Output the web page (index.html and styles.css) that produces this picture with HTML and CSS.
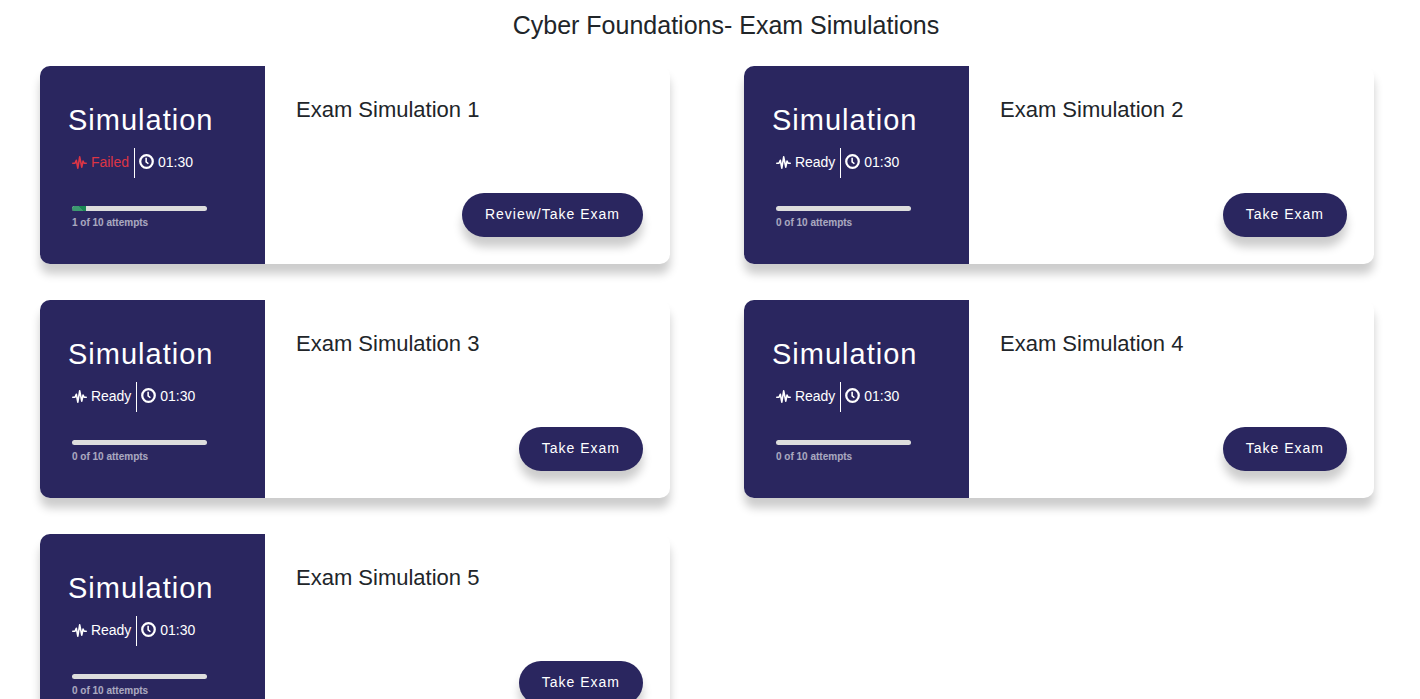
FILE: index.html
```html
<!DOCTYPE html>
<html lang="en">
<head>
  <meta charset="UTF-8" />
  <title>Cyber Foundations- Exam Simulations</title>
  <meta name="viewport" content="width=device-width, initial-scale=1.0" />
  <link rel="stylesheet" href="styles.css">
</head>
<body>

<!-- Shared icons -->
<svg class="icon-defs" aria-hidden="true">
  <symbol id="icon-pulse" viewBox="0 0 16 16">
    <path d="M0.8 8.8H3.2L4.6 5.6L6.2 14L8.2 2L10.4 13L11.8 6.4L13 8.8H15.2" fill="none" stroke="currentColor" stroke-width="1.7" stroke-linejoin="round" stroke-linecap="round" />
  </symbol>
  <symbol id="icon-clock" viewBox="0 0 16 16">
    <circle cx="8" cy="8" r="6.7" fill="none" stroke="currentColor" stroke-width="2.4" />
    <path d="M7.6 4V8.3L10 10.4" fill="none" stroke="currentColor" stroke-width="1.7" />
  </symbol>
</svg>

<main class="page">
  <h1 class="page-title">Cyber Foundations- Exam Simulations</h1>

  <div class="courses">
    <article class="course">
      <div class="course-preview">
        <h2>Simulation</h2>
        <div class="course-status">
          <span class="status failed"><svg class="pulse"><use href="#icon-pulse" /></svg> Failed</span>
          <span class="time"><svg class="clock"><use href="#icon-clock" /></svg> 01:30</span>
        </div>
        <div class="progress"><div class="progress-bar" style="width: 10%"></div></div>
        <span class="progress-text">1 of 10 attempts</span>
      </div>
      <div class="course-info">
        <h3>Exam Simulation 1</h3>
        <button class="btn" type="button">Review/Take Exam</button>
      </div>
    </article>

    <article class="course">
      <div class="course-preview">
        <h2>Simulation</h2>
        <div class="course-status">
          <span class="status"><svg class="pulse"><use href="#icon-pulse" /></svg> Ready</span>
          <span class="time"><svg class="clock"><use href="#icon-clock" /></svg> 01:30</span>
        </div>
        <div class="progress"></div>
        <span class="progress-text">0 of 10 attempts</span>
      </div>
      <div class="course-info">
        <h3>Exam Simulation 2</h3>
        <button class="btn" type="button">Take Exam</button>
      </div>
    </article>

    <article class="course">
      <div class="course-preview">
        <h2>Simulation</h2>
        <div class="course-status">
          <span class="status"><svg class="pulse"><use href="#icon-pulse" /></svg> Ready</span>
          <span class="time"><svg class="clock"><use href="#icon-clock" /></svg> 01:30</span>
        </div>
        <div class="progress"></div>
        <span class="progress-text">0 of 10 attempts</span>
      </div>
      <div class="course-info">
        <h3>Exam Simulation 3</h3>
        <button class="btn" type="button">Take Exam</button>
      </div>
    </article>

    <article class="course">
      <div class="course-preview">
        <h2>Simulation</h2>
        <div class="course-status">
          <span class="status"><svg class="pulse"><use href="#icon-pulse" /></svg> Ready</span>
          <span class="time"><svg class="clock"><use href="#icon-clock" /></svg> 01:30</span>
        </div>
        <div class="progress"></div>
        <span class="progress-text">0 of 10 attempts</span>
      </div>
      <div class="course-info">
        <h3>Exam Simulation 4</h3>
        <button class="btn" type="button">Take Exam</button>
      </div>
    </article>

    <article class="course">
      <div class="course-preview">
        <h2>Simulation</h2>
        <div class="course-status">
          <span class="status"><svg class="pulse"><use href="#icon-pulse" /></svg> Ready</span>
          <span class="time"><svg class="clock"><use href="#icon-clock" /></svg> 01:30</span>
        </div>
        <div class="progress"></div>
        <span class="progress-text">0 of 10 attempts</span>
      </div>
      <div class="course-info">
        <h3>Exam Simulation 5</h3>
        <button class="btn" type="button">Take Exam</button>
      </div>
    </article>
  </div>
</main>

</body>
</html>
```
FILE: styles.css
```css
* {
  margin: 0; padding: 0; box-sizing: border-box;
}
body {
  background: #fff;
  color: #212529;
  font-family: "Liberation Sans", Arial, sans-serif;
}
.icon-defs {
  display: none;
}

.page {
  padding: 10px 46px 36px 40px;
}
.page-title {
  padding-left: 38px;
  margin-bottom: 26px;
  font-size: 25px;
  font-weight: normal;
  line-height: 30px;
  text-align: center;
}
.courses {
  display: grid;
  grid-template-columns: 1fr 1fr;
  gap: 36px 74px;
}

.course {
  display: flex;
  min-height: 198px;
  background: #fff;
  border-radius: 10px;
  box-shadow: 0 10px 10px rgba(0,0,0,0.2);
  overflow: hidden;
}
.course-preview {
  flex: 0 0 225px;
  padding: 36px 28px 24px;
  background: #2a265f;
  color: #fff;
}
.course-preview h2 {
  font-size: 29px;
  font-weight: normal;
  letter-spacing: 1px;
  line-height: 36px;
}
.course-status {
  display: flex;
  margin: 10px 0 28px 4px;
  font-size: 14px;
  line-height: 28px;
}
.status {
  padding-right: 5px;
  border-right: 1px solid #fff;
  height: 30px;
}
.time {
  padding-left: 4px;
}
.failed {
  color: #dc3545;
}
.pulse {
  width: 15px;
  height: 15px;
  vertical-align: -3px;
}
.clock {
  width: 15px;
  height: 15px;
  vertical-align: -2px;
}
.progress {
  width: 135px;
  height: 5px;
  margin-left: 4px;
  background: #ddd;
  border-radius: 3px;
  overflow: hidden;
}
.progress-bar {
  height: 100%;
  background: repeating-linear-gradient(45deg, #198754 0 2px, #3c9970 2px 8px, #198754 8px 14px);
}
.progress-text {
  display: block;
  margin: 6px 0 0 4px;
  font-size: 10px;
  font-weight: bold;
  line-height: 12px;
  opacity: 0.6;
}

.course-info {
  flex: 1;
  display: flex;
  flex-direction: column;
  justify-content: space-between;
  align-items: flex-end;
  padding: 31px 27px 27px 31px;
}
.course-info h3 {
  align-self: flex-start;
  font-size: 22px;
  font-weight: normal;
  line-height: 26px;
}
.btn {
  height: 44px;
  padding: 0 23px 2px;
  background: #2a265f;
  color: #fff;
  border: none;
  border-radius: 50px;
  box-shadow: 0 10px 10px rgba(0,0,0,0.2);
  font-family: inherit;
  font-size: 14px;
  letter-spacing: 1px;
  cursor: pointer;
}
.btn:hover {
  background: #3b3680;
}

@media (max-width: 1100px) {
  .courses {
    grid-template-columns: 1fr;
  }
}
```
